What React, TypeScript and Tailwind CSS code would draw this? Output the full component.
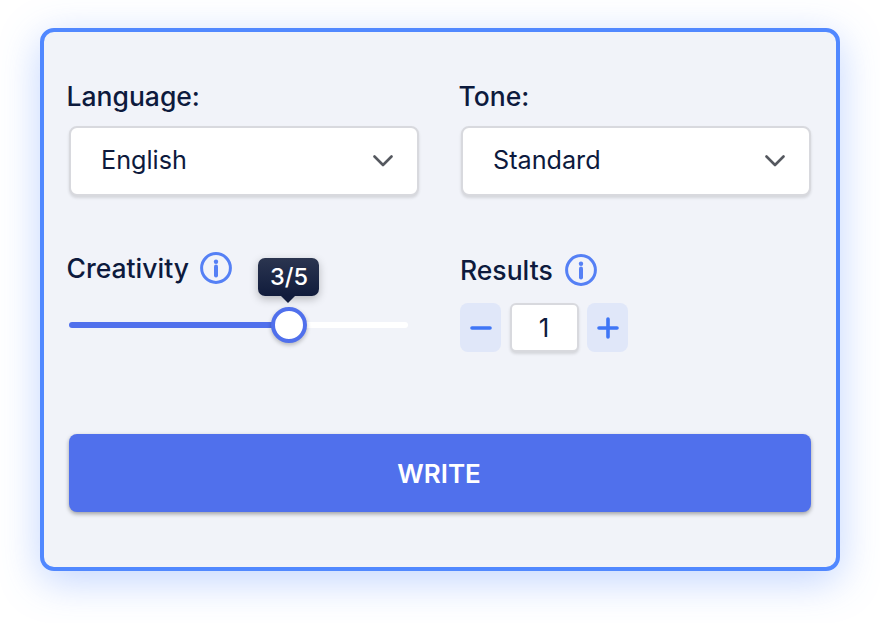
import { useState } from 'react'

function InfoIcon() {
  return (
    <svg width="32" height="32" viewBox="0 0 32 32" fill="none">
      <circle cx="16" cy="16" r="14.4" stroke="#5580f5" strokeWidth="3" />
      <circle cx="16" cy="9.8" r="2.2" fill="#5580f5" />
      <path d="M16 14.5v9" stroke="#5580f5" strokeWidth="4" strokeLinecap="round" />
    </svg>
  )
}

function Chevron() {
  return (
    <svg width="20" height="12" viewBox="0 0 20 12" fill="none">
      <path d="M1.5 1.5 10 10l8.5-8.5" stroke="#55585f" strokeWidth="2.6" strokeLinecap="round" strokeLinejoin="round" />
    </svg>
  )
}

function Select({ label, value }: { label: string; value: string }) {
  return (
    <div className="w-[350px]">
      <div className="-ml-[2.5px] h-[30px] text-[26.5px] font-[450] leading-[28px] text-[#0d1a3d]">{label}</div>
      <div className="mt-[14px] flex h-[70px] items-center justify-between rounded-[8px] border-2 border-[#d8d9de] bg-white pl-[30px] pr-[24px] shadow-[0_2px_3px_rgba(0,0,0,0.12)]">
        <span className="pb-[1px] text-[25.2px] text-[#0d1a3d]">{value}</span>
        <Chevron />
      </div>
    </div>
  )
}

export default function App() {
  const [results] = useState(1)

  return (
    <div className="h-[623px] w-[880px] overflow-hidden bg-white pl-[40px] pt-[28px] font-['Inter',sans-serif]">
      <div className="h-[543px] w-[800px] rounded-[14px] border-4 border-[#5188ff] bg-[#f1f3f9] pl-[25px] pt-[50px] shadow-[0_10px_40px_rgba(81,136,255,0.35)]">
        <div className="flex gap-[42px]">
          <Select label="Language:" value="English" />
          <Select label="Tone:" value="Standard" />
        </div>

        <div className="mt-[56px] flex h-[128px] gap-[52px]">
          <div className="relative w-[339px]">
            <div className="-ml-[2.5px] flex items-center gap-[11.5px]">
              <span className="text-[26.5px] font-[450] leading-[32px] text-[#0d1a3d]">Creativity</span>
              <InfoIcon />
            </div>
            {/* slider */}
            <div className="relative mt-[38px] h-[6px] w-[339px] rounded-full bg-white">
              <div className="h-[6px] w-[220px] rounded-full bg-[#5070ec]" />
              <div className="absolute left-[202px] top-[-15px] h-[36px] w-[36px] rounded-full border-[4px] border-[#5070ec] bg-white shadow-[0_2px_4px_rgba(0,0,0,0.25)]" />
              <div className="absolute left-[189px] top-[-64px] flex h-[38px] w-[61px] items-center justify-center rounded-[7px] bg-gradient-to-b from-[#2b3550] to-[#111c3c] pl-[1px] text-[23.5px] font-[450] text-white shadow-[0_3px_8px_rgba(0,0,0,0.25)]">
                3/5
                <div className="absolute left-[23px] top-[38px] h-0 w-0 border-x-[7px] border-t-[7px] border-x-transparent border-t-[#111c3c]" />
              </div>
            </div>
          </div>

          <div>
            <div className="mt-[2px] flex items-center gap-[12px]">
              <span className="text-[26.5px] font-[450] leading-[32px] text-[#0d1a3d]">Results</span>
              <InfoIcon />
            </div>
            <div className="mt-[17px] flex items-center gap-[8.5px]">
              <button className="flex h-[49px] w-[41px] items-center justify-center rounded-[8px] bg-[#e0e7f9]">
                <svg width="22" height="4" viewBox="0 0 22 4"><path d="M2 2h18" stroke="#3f76f6" strokeWidth="3.6" strokeLinecap="round" /></svg>
              </button>
              <div className="flex h-[49px] w-[69px] items-center justify-center rounded-[6px] border-2 border-[#d8d9de] bg-white text-[26px] text-[#0d1a3d] shadow-[0_2px_3px_rgba(0,0,0,0.12)]">
                {results}
              </div>
              <button className="flex h-[49px] w-[41px] items-center justify-center rounded-[8px] bg-[#e0e7f9]">
                <svg width="22" height="22" viewBox="0 0 22 22"><path d="M2 11h18M11 2v18" stroke="#3f76f6" strokeWidth="3.6" strokeLinecap="round" /></svg>
              </button>
            </div>
          </div>
        </div>

        <button className="mt-[54px] flex h-[78px] w-[742px] items-center justify-center rounded-[8px] bg-[#5070ec] pr-[2px] text-[26px] font-semibold text-white shadow-[0_2px_4px_rgba(0,0,0,0.35)]">
          WRITE
        </button>
      </div>
    </div>
  )
}
